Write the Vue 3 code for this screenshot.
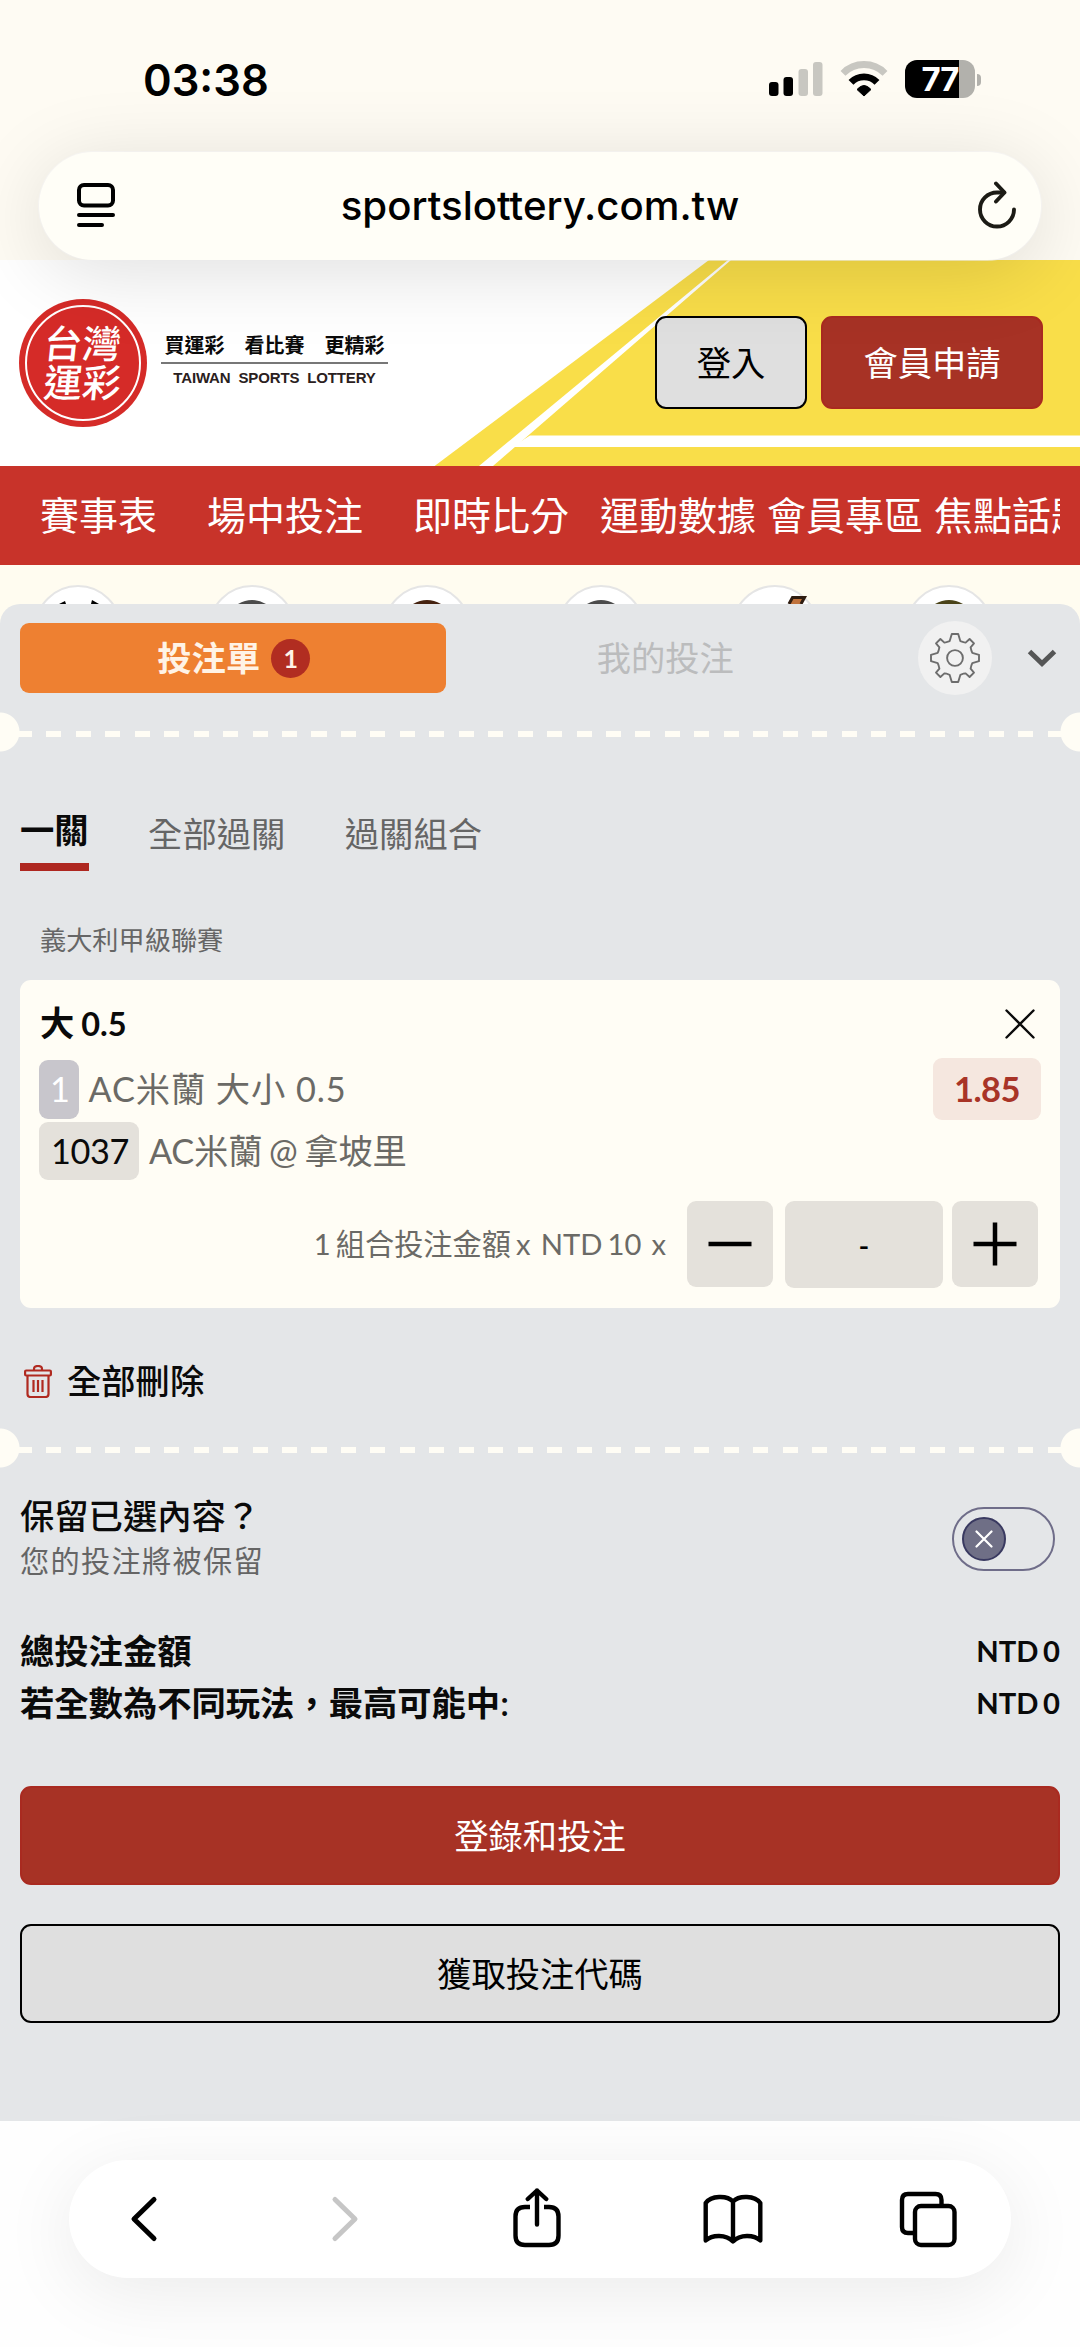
<script setup>
import { ref } from 'vue'

const navItems = [
  { label: '賽事表', gap: 0 },
  { label: '場中投注', gap: 50 },
  { label: '即時比分', gap: 50 },
  { label: '運動數據', gap: 31 },
  { label: '會員專區', gap: 11 },
  { label: '焦點話題', gap: 11 },
]

const sports = ['#000000', '#4b4b4b', '#45220f', '#4b4b4b', 'bat', '#4a4318']

const modes = ['一關', '全部過關', '過關組合']
const activeMode = ref(0)
const selections = ref(1)
</script>

<template>
  <div class="screen">
    <header class="chrome-top">
      <div class="status">
        <span class="clock">03:38</span>
        <div class="status-icons">
          <svg width="54" height="36" viewBox="0 0 54 36">
            <rect x="0" y="21" width="9.5" height="14" rx="3" fill="#000" />
            <rect x="14.5" y="16" width="9.5" height="19" rx="3" fill="#000" />
            <rect x="29.500" y="8" width="9.5" height="27" rx="3" fill="#c8c7c1" />
            <rect x="44" y="1" width="9.5" height="34" rx="3" fill="#c8c7c1" />
          </svg>
          <svg class="wifi" width="48" height="36" viewBox="0 0 48 36">
            <path d="M3 12.300 A29.500 29.500 0 0 1 45 12.300" fill="none" stroke="#c8c7c1" stroke-width="6.800" />
            <path d="M11 21.300 A18.100 18.100 0 0 1 37 21.300" fill="none" stroke="#000" stroke-width="6.800" />
            <path d="M24 35 L17 28.500 Q24 20.500 31 28.500 Z" fill="#000" stroke="#000" stroke-width="1" stroke-linejoin="round" />
          </svg>
          <div class="battery">
            <div class="battery-body"><span>77</span></div>
            <i class="battery-nub"></i>
          </div>
        </div>
      </div>
      <div class="address">
        <svg width="40" height="48" viewBox="0 0 40 48" fill="none" stroke="#000" stroke-width="4" stroke-linecap="round">
          <rect x="3" y="3" width="34" height="20.500" rx="5" />
          <path d="M3 33h34M3 43h23" />
        </svg>
        <span class="url">sportslottery.com.tw</span>
        <svg width="42" height="50" viewBox="0 0 42 50" fill="none" stroke="#1c1b15" stroke-width="3.900" stroke-linecap="round" stroke-linejoin="round">
          <path d="M38 28.500a17 17 0 1 1-17-17h7" />
          <path d="M20 2.500l8.500 9-8.500 9" />
        </svg>
      </div>
    </header>

    <section class="brand">
      <svg class="court" width="646" height="206" viewBox="0 0 646 206" aria-hidden="true">
        <path d="M275 0H646V206H0.600Z" fill="#f9de49" />
        <path d="M294 0h3L59 206H45Z" fill="#fff" />
        <path d="M96 175.500H646V187H78Z" fill="#fff" />
      </svg>
      <div class="seal">
        <div class="seal-ring"><span>台灣</span><span>運彩</span></div>
      </div>
      <div class="tagline">
        <p class="zh">買運彩　看比賽　更精彩</p>
        <p class="en">TAIWAN SPORTS LOTTERY</p>
      </div>
      <button class="btn outline login">登入</button>
      <button class="btn solid join">會員申請</button>
    </section>

    <nav class="nav">
      <div class="nav-clip">
        <a v-for="n in navItems" :key="n.label" :style="{ marginLeft: n.gap + 'px' }">{{ n.label }}</a>
      </div>
    </nav>

    <div class="sports">
      <svg v-for="(s, i) in sports" :key="i" width="88" height="19" viewBox="0 0 88 19">
        <circle cx="44" cy="43.500" r="42.500" fill="#fff" stroke="#e5e5e5" stroke-width="2" />
        <path v-if="i === 0" d="M25 19l6-3 1 3zM57 19l1-4 7 4z" :fill="s" />
        <path v-else-if="s === 'bat'" d="M58 19l3.500-6.500h12L70 19" fill="#c0723c" stroke="#2e1c10" stroke-width="3" />
        <path v-else d="M30 19q14-8 28 0z" :fill="s" />
      </svg>
    </div>

    <main class="slip">
      <div class="slip-head">
        <button class="slip-tab on">投注單<span class="count">{{ selections }}</span></button>
        <button class="slip-tab off">我的投注</button>
        <span class="gear">
          <svg width="52" height="52" viewBox="-26 -26 52 52" fill="none" stroke="#6d6d6d" stroke-width="1.900" stroke-linejoin="round">
            <circle r="7.900" />
            <path d="M-3.200 -24H3.200L5.400 -16.800Q9.500 -15.200 10.600 -15.400L14.600 -19L19 -14.600L15.600 -10.600Q16.200 -7.500 17.300 -5.200L24 -3.200V3.200L17.300 5.200Q16.200 7.500 15.600 10.600L19 14.600L14.600 19L10.600 15.400Q9.500 15.200 5.400 16.800L3.200 24H-3.200L-5.400 16.800Q-9.500 15.200 -10.600 15.400L-14.600 19L-19 14.600L-15.600 10.600Q-16.200 7.500 -17.300 5.200L-24 3.200V-3.200L-17.300 -5.200Q-16.200 -7.500 -15.600 -10.600L-19 -14.600L-14.600 -19L-10.600 -15.400Q-9.500 -15.200 -5.400 -16.800Z" />
          </svg>
        </span>
        <svg class="collapse" width="30" height="18" viewBox="0 0 30 18" fill="none" stroke="#555656" stroke-width="5"><path d="M2.500 2.500L15 14.500L27.500 2.500" /></svg>
      </div>

      <div class="perforation"></div>

      <div class="modes">
        <a v-for="(m, i) in modes" :key="m" :class="{ active: i === activeMode }">{{ m }}</a>
      </div>
      <p class="league">義大利甲級聯賽</p>

      <article class="card">
        <div class="row title">
          <strong>大 <span>0.5</span></strong>
          <svg width="30" height="30" viewBox="0 0 30 30" stroke="#0b0b0b" stroke-width="2.400" stroke-linecap="round"><path d="M1.500 1.500l27 27M28.500 1.500l-27 27" /></svg>
        </div>
        <div class="row pick">
          <div class="lines">
            <div class="line wide"><span class="tag cool">1</span>AC米蘭 大小 0.5</div>
            <div class="line tight"><span class="tag">1037</span>AC米蘭 @ 拿坡里</div>
          </div>
          <span class="odds">1.85</span>
        </div>
        <div class="row stake">
          <span class="formula">1 組合投注金額 x&nbsp; NTD 10 &nbsp;x</span>
          <button class="step"><svg width="44" height="44" viewBox="0 0 44 44" stroke="#000" stroke-width="4.500"><path d="M.5 22h43" /></svg></button>
          <span class="amount">-</span>
          <button class="step"><svg width="44" height="44" viewBox="0 0 44 44" stroke="#000" stroke-width="4.500"><path d="M.5 22h43M22 .5v43" /></svg></button>
        </div>
      </article>

      <div class="clear">
        <svg width="28" height="33" viewBox="0 0 28 33" fill="none" stroke="#b02a20" stroke-width="2.200" stroke-linejoin="round">
          <path d="M10 5.500V4q0-3 4-3t4 3v1.500" />
          <rect x="1.100" y="5.500" width="25.800" height="5" rx="1" />
          <path d="M3.500 10.500V29q0 3 3 3h15q3 0 3-3V10.500M9.500 15v12M14 15v12M18.500 15v12" />
        </svg>
        <span>全部刪除</span>
      </div>

      <div class="perforation"></div>

      <div class="keep">
        <div>
          <p class="keep-title">保留已選內容？</p>
          <p class="keep-note">您的投注將被保留</p>
        </div>
        <div class="toggle"><span class="knob">
          <svg width="18" height="18" viewBox="0 0 18 18" stroke="#fff" stroke-width="2.200" stroke-linecap="round"><path d="M1.500 1.500l15 15M16.500 1.500l-15 15" /></svg>
        </span></div>
      </div>

      <dl class="totals">
        <div><dt>總投注金額</dt><dd>NTD 0</dd></div>
        <div><dt>若全數為不同玩法，最高可能中:</dt><dd>NTD 0</dd></div>
      </dl>

      <button class="btn solid block">登錄和投注</button>
      <button class="btn outline block">獲取投注代碼</button>
    </main>

    <footer class="chrome-bottom">
      <div class="toolbar">
        <svg class="back" width="60" height="62" viewBox="0 0 60 62" stroke="#000"><path d="M40 11.500L20 31L40 50.500" /></svg>
        <svg class="forward" width="60" height="62" viewBox="0 0 60 62" stroke="#c6c6c6"><path d="M20 11.500L40 31L20 50.500" /></svg>
        <svg class="share" width="60" height="62" viewBox="0 0 60 62" stroke="#000">
          <path stroke-linecap="butt" d="M23 19H18q-9.500 0-9.500 9.500V47.500q0 9.500 9.500 9.500H42q9.500 0 9.500-9.500V28.500q0-9.500-9.500-9.500H37" />
          <path d="M30 36.500V2.500M20.800 11L30 2.500L39.200 11" />
        </svg>
        <svg class="book" width="60" height="62" viewBox="0 0 60 62" stroke="#000">
          <path d="M30 13.500C24 7 8 7.500 2.700 15V52.500C9 46.500 23 46 30 53.500C37 46 51 46.500 57.300 52.500V15C52 7.500 36 7 30 13.500V53" />
        </svg>
        <svg class="tabs" width="60" height="62" viewBox="0 0 60 62" stroke="#000">
          <rect x="18" y="18" width="39.500" height="39" rx="6" />
          <path stroke-linecap="butt" d="M16.500 45H11q-6 0-6-6V12q0-6 6-6H38.500q6 0 6 6V16.500" />
        </svg>
      </div>
    </footer>
  </div>
</template>

<style>
body {
  margin: 0;
}
</style>

<style scoped>
* {
  box-sizing: border-box;
}
p,
dl,
dd {
  margin: 0;
}
svg {
  display: block;
  flex: none;
}
button {
  font: inherit;
  padding: 0;
  border: 0;
}
.screen {
  width: 1080px;
  height: 2347px;
  overflow: hidden;
  display: flex;
  flex-direction: column;
  font-family: Lato, 'Noto Sans CJK TC', sans-serif;
  font-size: 34.300px;
  line-height: 40px;
  color: #0a0a0a;
  background: #fff;
}

/* status bar and address field */
.chrome-top {
  height: 260px;
  flex: none;
  background: #fefbf3;
  font-family: Inter, sans-serif;
  position: relative;
  z-index: 2;
}
.status {
  height: 152px;
  padding: 58px 99px 0 143px;
  display: flex;
  justify-content: space-between;
}
.clock {
  font-size: 43.500px;
  font-weight: 600;
  line-height: 44px;
  color: #000;
}
.status-icons {
  display: flex;
  height: 44px;
  align-items: flex-start;
  padding-top: 3px;
}
.wifi {
  margin: 0 17px;
}
.battery {
  display: flex;
  align-items: center;
  gap: 2px;
}
.battery-body {
  width: 70px;
  height: 38px;
  margin-top: -1px;
  border-radius: 12px;
  background: linear-gradient(90deg, #000 54px, #b2b1ac 54px);
  color: #fff;
  font-size: 33px;
  font-weight: 700;
  line-height: 38px;
  text-align: center;
  letter-spacing: -1px;
}
.battery-nub {
  width: 4px;
  height: 12px;
  border-radius: 0 4px 4px 0;
  background: #b2b1ac;
}
.address {
  height: 108px;
  margin: 0 39px;
  padding: 0 23px 0 37px;
  border-radius: 54px;
  display: flex;
  align-items: center;
  background: #fffef7;
  box-shadow: 0 12px 80px rgba(0, 0, 0, 0.13), 0 0 0 1px rgba(255, 255, 255, 0.6);
}
.url {
  flex: 1;
  padding-right: 12px;
  text-align: center;
  font-size: 40.200px;
  font-weight: 500;
  line-height: 48px;
  color: #000;
}

/* brand header */
.brand {
  height: 206px;
  flex: none;
  position: relative;
  display: flex;
  align-items: flex-start;
  padding: 39px 37px 0 19px;
  background: #fff;
}
.court {
  position: absolute;
  right: 0;
  top: 0;
}
.seal {
  width: 128px;
  height: 128px;
  padding: 6px;
  border-radius: 50%;
  background: #d52b28;
}
.seal-ring {
  height: 116px;
  border: 2px solid #fff;
  border-radius: 50%;
  display: flex;
  flex-direction: column;
  align-items: center;
  justify-content: center;
  color: #fff;
  font-weight: 500;
  font-size: 38.500px;
  line-height: 39px;
}
.seal-ring span {
  transform: skewX(-6deg);
}
.tagline {
  width: 227px;
  margin: 29px 0 0 14px;
  text-align: center;
  white-space: nowrap;
}
.zh {
  height: 36px;
  border-bottom: 2px solid #777;
  font-size: 20px;
  line-height: 34px;
  font-weight: 700;
}
.en {
  font-family: 'Liberation Sans', sans-serif;
  font-weight: 700;
  font-size: 15px;
  line-height: 28px;
  word-spacing: 4px;
  letter-spacing: -0.150px;
  color: #2a2020;
}
.btn {
  position: relative;
  display: block;
  text-align: center;
  border-radius: 11px;
  border: 2.500px solid #000;
}
.solid {
  background: #a73225;
  border-color: #a92a20;
  color: #fff;
}
.outline {
  background: #dfdfdf;
  color: #000;
}
.login {
  width: 152px;
  height: 93px;
  margin: 17px 14px 0 auto;
}
.join {
  width: 222px;
  height: 93px;
  margin-top: 17px;
}

/* navigation */
.nav {
  height: 99px;
  flex: none;
  padding: 0 20px 0 40px;
  background: #c8332a;
  color: #fff;
  font-size: 39px;
  line-height: 99px;
}
.nav-clip {
  display: flex;
  overflow: hidden;
  white-space: nowrap;
}
.nav-clip a {
  flex: none;
}
.sports {
  height: 57px;
  flex: none;
  display: flex;
  gap: 86.300px;
  padding: 20px 0 0 34px;
  background: #fffcf0;
}

/* bet slip */
.slip {
  height: 1517px;
  flex: none;
  margin-top: -18px;
  border-radius: 20px 20px 0 0;
  padding: 19px 0 0;
  background: #e4e6e8;
  position: relative;
}
.slip-head {
  display: flex;
  align-items: center;
  height: 70px;
  padding: 0 23px 0 20px;
}
.slip-tab {
  width: 426px;
  height: 70px;
  display: flex;
  align-items: center;
  justify-content: center;
  border-radius: 9px;
  background: none;
  color: #bbbcbd;
}
.on {
  padding-left: 2px;
  background: #ee8031;
  color: #fff3e6;
  font-weight: 700;
}
.off {
  width: 440px;
}
.count {
  width: 39px;
  height: 39px;
  margin-left: 11px;
  border-radius: 50%;
  background: #b12d21;
  font-size: 25px;
  line-height: 39px;
}
.gear {
  width: 74px;
  height: 74px;
  margin: 0 35px 0 33px;
  flex: none;
  display: grid;
  place-items: center;
  border-radius: 50%;
  background: #f1f1f1;
}
.perforation {
  height: 40px;
  margin-top: 19px;
  background:
    radial-gradient(circle at 0 20px, #fffdf5 19px, transparent 20px),
    radial-gradient(circle at 1080px 20px, #fffdf5 19px, transparent 20px),
    repeating-linear-gradient(90deg, #fffdf5 0 15px, transparent 15px 29.450px) 17.200px 19px / 1100px 6px no-repeat;
}
.modes {
  display: flex;
  gap: 59.500px;
  height: 118px;
  padding: 62px 20px 0;
  color: #656565;
  line-height: 40px;
}
.modes .active {
  height: 61px;
  margin-top: -4px;
  border-bottom: 8px solid #ae2720;
  color: #0a0a0a;
  font-weight: 700;
}
.league {
  height: 110px;
  padding: 53px 40px 0;
  font-size: 26.200px;
  line-height: 34px;
  color: #666;
}
.card {
  height: 328px;
  margin: 0 20px;
  padding: 16px 20px 0;
  border-radius: 11px;
  background: #fffdf5;
}
.row {
  display: flex;
  justify-content: space-between;
}
.title {
  height: 64px;
  padding-right: 5px;
}
.title strong {
  line-height: 54px;
  word-spacing: -1.500px;
}
.title strong span {
  font-size: 32.500px;
}
.title svg {
  margin-top: 13px;
}
.pick {
  height: 142px;
  color: #6b6a66;
}
.lines {
  display: flex;
  flex-direction: column;
  gap: 3px;
}
.line {
  display: flex;
  height: 58.500px;
  line-height: 58px;
  white-space: pre;
}
.wide {
  letter-spacing: 0.900px;
}
.tight {
  word-spacing: -1.800px;
  letter-spacing: -0.200px;
}
.tag {
  margin: 0 10px 0 -1px;
  padding: 0 10px 0 12px;
  border-radius: 9px;
  background: #e4e1db;
  color: #0a0a0a;
  letter-spacing: -0.400px;
}
.cool {
  padding: 0 9px 0 11px;
  background: #c8c6cc;
  color: #fff;
}
.odds {
  width: 108px;
  height: 62px;
  margin: -2px -1px 0 0;
  border-radius: 9px;
  background: #f5e7df;
  color: #a83427;
  font-size: 34.500px;
  font-weight: 700;
  line-height: 62px;
  text-align: center;
  letter-spacing: -0.600px;
}
.stake {
  justify-content: flex-end;
  padding-right: 2px;
  color: #6b6a66;
}
.formula {
  font-size: 29.200px;
  line-height: 84px;
  margin-right: 21px;
  word-spacing: -2.400px;
}
.step {
  width: 86px;
  height: 86px;
  margin-top: -1px;
  display: grid;
  place-items: center;
  border-radius: 9px;
  background: #e4e1db;
}
.amount {
  width: 158px;
  height: 87px;
  margin: -1px 9px 0 12px;
  border-radius: 9px;
  background: #e4e1db;
  color: #000;
  font-size: 29px;
  font-weight: 600;
  line-height: 87px;
  text-align: center;
}
.clear {
  display: flex;
  align-items: center;
  gap: 15px;
  height: 101px;
  padding: 45px 24px 0;
  font-weight: 500;
}
.keep {
  height: 144px;
  padding: 26px 25px 0 20px;
  display: flex;
  justify-content: space-between;
}
.keep-title {
  font-weight: 500;
  line-height: 44px;
}
.keep-note {
  font-size: 29.200px;
  letter-spacing: 1.300px;
  line-height: 46px;
  color: #656565;
}
.toggle {
  width: 103px;
  height: 64px;
  margin-top: 13px;
  padding: 8px;
  border: 2px solid #6f6d89;
  border-radius: 32px;
}
.knob {
  width: 44px;
  height: 44px;
  display: grid;
  place-items: center;
  border-radius: 50%;
  border: 2px solid #393960;
  background: #6f6f86;
}
.totals {
  padding: 13px 20px 0;
  height: 174px;
  font-weight: 600;
}
.totals div {
  display: flex;
  justify-content: space-between;
  height: 52px;
  line-height: 52px;
}
.totals dd {
  font-size: 29.200px;
  font-weight: 700;
  word-spacing: -2.500px;
}
.block {
  width: 1040px;
  height: 99px;
  margin: 0 20px 39px;
}

/* browser toolbar */
.chrome-bottom {
  flex: none;
  height: 226px;
  padding: 39px 69px 0;
  background: #fefefe;
  position: relative;
}
.toolbar {
  height: 118px;
  padding-left: 45px;
  border-radius: 59px;
  display: flex;
  align-items: center;
  background: #fff;
  box-shadow: 0 14px 75px rgba(0, 0, 0, 0.08);
}
.toolbar svg {
  fill: none;
  stroke-width: 4.400;
  stroke-linecap: round;
  stroke-linejoin: round;
}
.toolbar .back,
.toolbar .forward {
  stroke-width: 5;
}
.forward {
  margin-left: 141px;
}
.share {
  margin-left: 131.500px;
}
.book {
  margin-left: 136px;
}
.tabs {
  margin-left: 134px;
}
</style>
